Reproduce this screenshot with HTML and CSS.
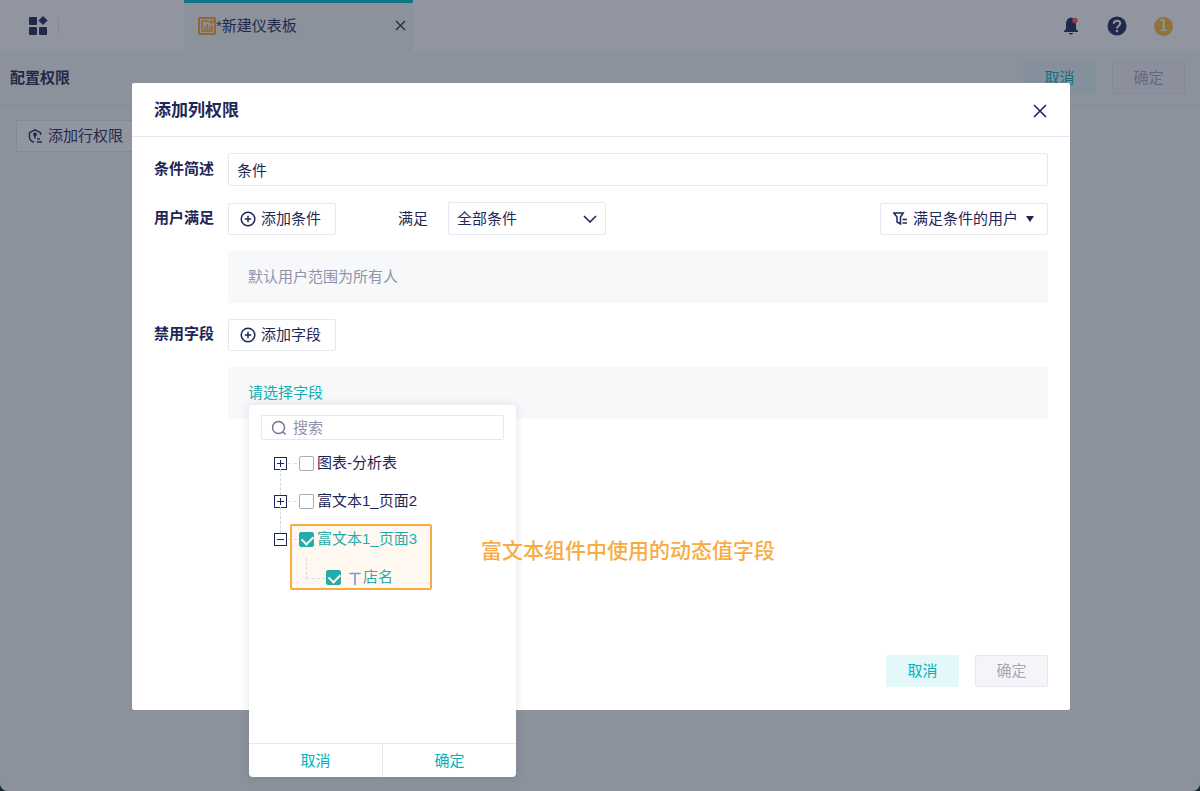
FILE: index.html
```html
<!DOCTYPE html>
<html lang="zh-CN">
<head>
  <meta charset="UTF-8" />
  <meta name="viewport" content="width=device-width, initial-scale=1.0"/>
  <title>新建仪表板 - 配置权限</title>
  <link rel="stylesheet" href="styles.css">
</head>
<body>
  <div class="app">
    <header class="topbar">
      <div class="topbar-left">
        <svg class="logo" width="20" height="20" viewBox="0 0 20 20" fill="currentColor">
          <rect x="1" y="1" width="8" height="8" rx="1"/>
          <rect x="1" y="11" width="8" height="8" rx="1"/>
          <rect x="11" y="11" width="8" height="8" rx="1"/>
          <path d="M15 .5l4 4-4 4-4-4z" stroke="currentColor" stroke-linejoin="round"/>
        </svg>
        <span class="divider"></span>
      </div>
      <div class="tab">
        <svg width="18" height="18" viewBox="0 0 18 18">
          <rect x="1" y="1" width="16" height="16" rx="1" fill="none" stroke="#ffa126" stroke-width="2"/>
          <path d="M11 4H4v10h10V8.500M7 13V9M9.500 13V7M12 13V9M13.500 2.500v5M11 5h5" fill="none" stroke="#ffa126" stroke-width="1.500"/>
        </svg>
        <span class="tab-name">*新建仪表板</span>
        <button class="icon-btn" type="button" aria-label="关闭标签">
          <svg width="11" height="11" viewBox="0 0 11 11"><path d="M1 1l9 9M10 1l-9 9" stroke="currentColor" stroke-width="1.300"/></svg>
        </button>
      </div>
      <div class="topbar-right">
        <svg width="18" height="20" viewBox="0 0 18 20">
          <path d="M9 1.500c-3.500.8-5 3-5 6v5.500l-2 2v1h14v-1l-2-2V7.500c0-3-1.500-5.200-5-6zM7 17h4c0 2-4 2-4 0z" fill="#1f2757"/>
          <circle cx="13" cy="4.500" r="2.700" fill="#f55"/>
        </svg>
        <svg width="20" height="20" viewBox="0 0 20 20">
          <circle cx="10" cy="10" r="9.500" fill="#1f2757"/>
          <path d="M6.800 7.800C7 3.500 13.200 3.800 13.200 7.500c0 2.300-3.200 2.300-3.200 5" fill="none" stroke="#fff" stroke-width="2"/>
          <circle cx="10" cy="15" r="1.200" fill="#fff"/>
        </svg>
        <span class="avatar">1</span>
      </div>
    </header>

    <div class="subbar">
      <h1>配置权限</h1>
      <button class="btn btn-light" type="button">取消</button>
      <button class="btn btn-disabled" type="button" disabled>确定</button>
    </div>

    <main class="page">
      <button class="btn btn-outline" type="button">
        <svg width="14" height="14" viewBox="0 0 14 14" fill="none" stroke="currentColor" stroke-width="1.500">
          <path d="M12.500 6V3.700L7 .8 1.500 3.700V8c0 2.500 1.800 4.300 4.500 5.300M7 4.500v5M9 10h3M9 13h5"/>
          <circle cx="7" cy="5.500" r="1.200"/>
        </svg>
        添加行权限
      </button>
    </main>

    <div class="overlay">
      <section class="modal" role="dialog" aria-labelledby="modalTitle">
        <div class="modal-header">
          <h2 id="modalTitle">添加列权限</h2>
          <button class="icon-btn" type="button" aria-label="关闭">
            <svg width="14" height="14" viewBox="0 0 14 14"><path d="M1 1l12 12M13 1L1 13" stroke="currentColor" stroke-width="1.600"/></svg>
          </button>
        </div>

        <div class="modal-body">
          <div class="form-row">
            <label class="form-label" for="desc">条件简述</label>
            <input class="text-input" id="desc" type="text" value="条件">
          </div>

          <div class="form-row">
            <span class="form-label">用户满足</span>
            <button class="btn btn-outline btn-add" type="button">
              <svg width="16" height="16" viewBox="0 0 16 16" fill="none" stroke="currentColor" stroke-width="1.500">
                <circle cx="8" cy="8" r="6.800"/><path d="M8 4.800v6.400M4.800 8h6.400"/>
              </svg>
              添加条件
            </button>
            <label class="match-label" for="match">满足</label>
            <div class="select-wrap">
              <select id="match">
                <option>全部条件</option>
              </select>
              <svg width="14" height="8" viewBox="0 0 14 8"><path d="M1 1l6 6 6-6" fill="none" stroke="currentColor" stroke-width="1.600"/></svg>
            </div>
            <button class="btn btn-outline btn-users" type="button">
              <svg width="14" height="13" viewBox="0 0 14 13" fill="none" stroke="currentColor" stroke-width="1.500">
                <path d="M.8 1h9.400L7.500 5V12L4 10V5zM9.500 7.500H14M9.500 11H14"/>
              </svg>
              满足条件的用户
              <svg class="caret" width="8" height="6" viewBox="0 0 8 6"><path d="M0 0h8L4 6z" fill="currentColor"/></svg>
            </button>
          </div>

          <div class="scope scope-empty">默认用户范围为所有人</div>

          <div class="form-row">
            <span class="form-label">禁用字段</span>
            <button class="btn btn-outline btn-add" type="button">
              <svg width="16" height="16" viewBox="0 0 16 16" fill="none" stroke="currentColor" stroke-width="1.500">
                <circle cx="8" cy="8" r="6.800"/><path d="M8 4.800v6.400M4.800 8h6.400"/>
              </svg>
              添加字段
            </button>
          </div>

          <div class="scope">
            <a class="pick-link" href="#">请选择字段</a>

            <div class="picker">
              <label class="search">
                <svg width="16" height="16" viewBox="0 0 16 16" fill="none" stroke="currentColor" stroke-width="1.400">
                  <circle cx="7.500" cy="7.500" r="6"/><path d="M12 12l2.500 2.500"/>
                </svg>
                <input type="text" placeholder="搜索" aria-label="搜索">
              </label>

              <ul class="tree">
                <li class="node">
                  <button class="toggle toggle-plus" type="button" aria-label="展开"></button>
                  <label><input type="checkbox">图表-分析表</label>
                </li>
                <li class="node">
                  <button class="toggle toggle-plus" type="button" aria-label="展开"></button>
                  <label><input type="checkbox">富文本1_页面2</label>
                </li>
                <li class="node node-on">
                  <button class="toggle" type="button" aria-label="收起"></button>
                  <label><input type="checkbox" checked>富文本1_页面3</label>
                </li>
                <li class="node node-on node-child">
                  <label>
                    <input type="checkbox" checked>
                    <svg class="type-icon" width="12" height="13" viewBox="0 0 12 13"><path d="M.5 1.500h11M6 1.500V13" fill="none" stroke="#7794d8" stroke-width="1.600"/></svg>
                    店名
                  </label>
                </li>
              </ul>
              <div class="highlight"></div>
              <p class="note">富文本组件中使用的动态值字段</p>

              <div class="picker-footer">
                <button type="button">取消</button>
                <button type="button">确定</button>
              </div>
            </div>
          </div>
        </div>

        <div class="modal-footer">
          <button class="btn btn-light" type="button">取消</button>
          <button class="btn btn-disabled" type="button" disabled>确定</button>
        </div>
      </section>
    </div>
  </div>
</body>
</html>
```

FILE: styles.css
```css
:root {
  --navy: #1f2757;
  --teal: #13adb5;
  --orange: #f8ab42;
  --grey: #9193ab;
  --line: #e6e7ef;
  --panel: #f7f8fa;
}

* {
  box-sizing: border-box;
}

body {
  margin: 0;
  background: #172733;
  font-family: "Liberation Sans", "Noto Sans CJK SC", sans-serif;
  font-size: 15px;
  line-height: 22px;
  color: var(--navy);
}

h1, h2, p, ul {
  margin: 0;
  padding: 0;
}

button, input, select {
  font: inherit;
  color: inherit;
}

button {
  cursor: pointer;
}

svg {
  flex: none;
}

.app {
  position: relative;
  min-height: 100vh;
  background: #f3f9f9;
  border-radius: 0 0 8px 8px;
  overflow: hidden;
}

/* top bar */
.topbar {
  display: flex;
  height: 52px;
  background: #fff;
}

.topbar-left {
  display: flex;
  align-items: center;
  gap: 10px;
  width: 184px;
  padding-left: 28px;
}

.divider {
  width: 1px;
  height: 14px;
  background: #e4e6ee;
}

.tab {
  display: flex;
  align-items: center;
  width: 229px;
  padding: 0 7px 4px 14px;
  background: #f3f9f9;
  border-top: 3px solid #00bccc;
}

.tab-name {
  flex: 1;
}

.icon-btn {
  display: flex;
  padding: 0;
  border: 0;
  background: none;
}

.topbar-right {
  display: flex;
  align-items: center;
  gap: 27px;
  margin-left: auto;
  padding-right: 27px;
}

.avatar {
  width: 19px;
  border-radius: 50%;
  background: #ffb638;
  color: #fff;
  font-family: "DejaVu Sans", sans-serif;
  line-height: 19px;
  text-align: center;
}

.subbar {
  display: flex;
  align-items: center;
  gap: 16px;
  height: 52px;
  padding: 0 15px 0 10px;
  box-shadow: 0 2px 6px rgba(31, 39, 87, 0.06);
}

.subbar h1 {
  flex: 1;
  font-size: 15px;
}

.page {
  padding: 16px;
}

/* buttons */
.btn {
  display: flex;
  align-items: center;
  justify-content: center;
  height: 32px;
  padding: 0 11px;
  border: 1px solid transparent;
  border-radius: 2px;
  white-space: nowrap;
}

.btn-light,
.btn-disabled {
  width: 73px;
}

.btn-light {
  background: #e4f7f9;
  color: #00b2c0;
}

.btn-disabled {
  background: #f5f5f9;
  border-color: var(--line);
  color: #a3a5b9;
}

.btn-outline {
  gap: 6px;
  background: #fff;
  border-color: var(--line);
}

/* dialog */
.overlay {
  position: absolute;
  inset: 0;
  display: flex;
  padding: 83px 130px 81px 132px;
  background: rgba(35, 43, 63, 0.5);
}

.modal {
  display: flex;
  flex: 1;
  flex-direction: column;
  background: #fff;
  border-radius: 2px;
}

.modal-header {
  display: flex;
  align-items: center;
  justify-content: space-between;
  height: 54px;
  padding: 2px 23px 0 22px;
  border-bottom: 1px solid var(--line);
}

.modal-header h2 {
  font-size: 17px;
}

.modal-body {
  display: flex;
  flex: 1;
  flex-direction: column;
  gap: 16px;
  padding: 16px 22px;
}

.form-row {
  display: flex;
  align-items: center;
}

.form-label {
  width: 74px;
  padding-bottom: 2px;
  font-weight: bold;
}

.text-input {
  flex: 1;
  height: 33px;
  padding: 0 8px;
  border: 1px solid var(--line);
  border-radius: 2px;
}

.btn-add {
  gap: 5px;
  width: 108px;
  justify-content: flex-start;
}

.match-label {
  margin-left: 62px;
}

.select-wrap {
  position: relative;
  width: 158px;
  margin-left: 20px;
}

.select-wrap select {
  display: block;
  width: 100%;
  height: 33px;
  padding: 0 8px;
  appearance: none;
  background: #fff;
  border: 1px solid var(--line);
  border-radius: 2px;
}

.select-wrap svg {
  position: absolute;
  top: 13px;
  right: 9px;
  pointer-events: none;
}

.btn-users {
  margin-left: auto;
  padding: 0 13px 0 12px;
}

.caret {
  margin-left: 2px;
}

.scope {
  position: relative;
  margin-left: 74px;
  padding: 15px 20px;
  background: var(--panel);
}

.scope-empty {
  color: var(--grey);
}

.pick-link {
  color: var(--teal);
  text-decoration: none;
}

.modal-footer {
  display: flex;
  justify-content: flex-end;
  gap: 16px;
  padding: 0 22px 23px;
}

/* field picker */
.picker {
  position: absolute;
  top: 38px;
  left: 21px;
  display: flex;
  flex-direction: column;
  width: 267px;
  height: 372px;
  background: #fff;
  border-radius: 4px;
  box-shadow: 0 0 10px rgba(31, 39, 87, 0.12);
}

.search {
  display: flex;
  align-items: center;
  gap: 6px;
  height: 25px;
  margin: 10px 12px 4px;
  padding: 0 9px;
  border: 1px solid var(--line);
  border-radius: 2px;
  color: #6d7192;
}

.search input {
  flex: 1;
  min-width: 0;
  padding: 0;
  border: 0;
  outline: 0;
}

.search input::placeholder {
  color: var(--grey);
}

.tree {
  flex: 1;
  list-style: none;
}

.node {
  position: relative;
  display: flex;
  align-items: center;
  height: 38px;
  padding-left: 25px;
}

.node label {
  display: flex;
  align-items: center;
}

.node input {
  width: 15px;
  height: 15px;
  margin: 0 3px 0 0;
  appearance: none;
  background: #fff;
  border: 1px solid #a9acbd;
  border-radius: 2px;
}

.node input:checked {
  position: relative;
  background: var(--teal);
  border-color: var(--teal);
}

.node input:checked::after {
  content: "";
  position: absolute;
  top: 2px;
  left: 2px;
  width: 9px;
  height: 6px;
  border: solid #fff;
  border-width: 0 0 2px 2px;
  transform: rotate(-45deg);
}

.node-on {
  color: var(--teal);
}

/* dashed guide lines between the nodes */
.node:not(.node-child)::after {
  content: "";
  position: absolute;
  top: 19px;
  left: 39px;
  width: 9px;
  border-top: 1px dashed #dcdee6;
}

.node:not(.node-on)::before {
  content: "";
  position: absolute;
  top: 25px;
  left: 31px;
  height: 26px;
  border-left: 1px dashed #d4d6e0;
}

.node-child {
  padding-left: 77px;
}

.node-child::before {
  content: "";
  position: absolute;
  top: 0;
  left: 57px;
  width: 18px;
  height: 20px;
  border: dashed #dcdee6;
  border-width: 0 0 1px 1px;
}

.toggle {
  width: 13px;
  height: 13px;
  margin-right: 12px;
  padding: 0;
  border: 1px solid var(--navy);
  background: linear-gradient(var(--navy), var(--navy)) center / 7px 1px no-repeat;
}

.toggle-plus {
  background:
    linear-gradient(var(--navy), var(--navy)) center / 7px 1px no-repeat,
    linear-gradient(var(--navy), var(--navy)) center / 1px 7px no-repeat;
}

.type-icon {
  margin: 3px 2px 0 5px;
}

.highlight {
  position: absolute;
  top: 119px;
  left: 41px;
  width: 142px;
  height: 66px;
  background: rgba(248, 171, 66, 0.08);
  border: 2px solid var(--orange);
  border-radius: 2px;
  pointer-events: none;
}

.note {
  position: absolute;
  top: 135px;
  left: 232px;
  color: var(--orange);
  font-size: 21px;
  font-weight: 500;
  white-space: nowrap;
}

.picker-footer {
  display: flex;
  border-top: 1px solid var(--line);
}

.picker-footer button {
  flex: 1;
  height: 33px;
  border: 0;
  background: none;
  color: #00b2c0;
}

.picker-footer button + button {
  border-left: 1px solid var(--line);
}
```
